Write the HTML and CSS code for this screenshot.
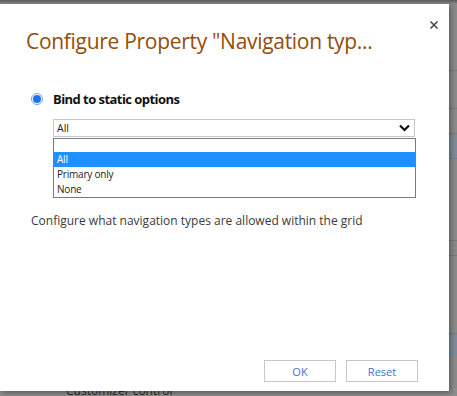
FILE: index.html
```html
<!DOCTYPE html>
<html>
<head>
<meta charset="utf-8">
<link rel="stylesheet" href="styles.css">
</head>
<body>
<div class="page">
  <div class="page-rows">
    <div class="row r1"></div>
    <div class="row r2"></div>
    <div class="row r3 sel"></div>
    <div class="row r4"></div>
    <div class="row r5"></div>
    <div class="row r6"></div>
    <div class="row r7 sel"></div>
  </div>
  <div class="page-foot"><span class="foot-text">Customizer control</span></div>
</div>
<div class="dialog">
  <button class="close" aria-label="Close"><svg width="8" height="8" viewBox="0 0 8 8"><path d="M0.5 0.5 L7.5 7.5 M7.5 0.5 L0.5 7.5" stroke="#444" stroke-width="1.5" fill="none"/></svg></button>
  <h1 class="title">Configure Property "Navigation typ...</h1>
  <div class="option">
    <span class="radio"><span class="dot"></span></span>
    <span class="option-label">Bind to static options</span>
  </div>
  <div class="select-wrap">
    <div class="select">
      <span>All</span>
      <svg class="chev" width="11" height="8" viewBox="0 0 11 8"><path d="M1 1.5 L5.5 6 L10 1.5" fill="none" stroke="#111" stroke-width="2.2"/></svg>
    </div>
    <ul class="list">
      <li class="empty"></li>
      <li class="active">All</li>
      <li>Primary only</li>
      <li>None</li>
    </ul>
  </div>
  <p class="desc">Configure what navigation types are allowed within the grid</p>
  <div class="actions">
    <button class="btn">OK</button>
    <button class="btn">Reset</button>
  </div>
</div>
</body>
</html>
```
FILE: styles.css
```css
* { box-sizing: border-box; }
html, body { margin: 0; padding: 0; }
body {
  width: 457px;
  height: 396px;
  overflow: hidden;
  position: relative;
  background: #8a8a8a;
  font-family: "Open Sans", "Noto Sans", sans-serif;
}
.page {
  height: 396px;
  display: flex;
  flex-direction: column;
  background: linear-gradient(#5a5a5a, #8a8a8a 4px);
}
.page-rows {
  flex: 1;
  display: flex;
  flex-direction: column;
  padding-top: 70px;
}
.row { border-top: 1px solid #7a7a7a; }
.r1 { height: 38px; }
.r2 { height: 25px; }
.r3 { height: 25px; }
.r4 { height: 82px; }
.r5 { height: 15px; }
.r6 { height: 78px; }
.r7 { height: 24px; }
.sel { background: #7e8c96; }
.page-foot {
  height: 8px;
  background: #8d8d8d;
  overflow: hidden;
  padding-left: 66px;
}
.foot-text {
  display: block;
  font-size: 12px;
  line-height: 12px;
  margin-top: -3px;
  color: #2a2a2a;
  font-family: "Open Sans", sans-serif;
}
.dialog {
  position: absolute;
  left: 0;
  top: 4px;
  width: 449px;
  height: 387px;
  background: #fff;
  box-shadow: 2px 2px 5px rgba(0,0,0,0.35);
  display: flex;
  flex-direction: column;
}
.close {
  position: absolute;
  left: 430px;
  top: 17px;
  border: 0;
  background: none;
  padding: 0;
  width: 8px;
  height: 8px;
  display: block;
}
.close svg { display: block; }
.title {
  margin: 22px 0 0 26px;
  font-size: 21px;
  line-height: 30px;
  font-weight: normal;
  color: #934d0b;
  letter-spacing: -0.3px;
}
.option {
  display: flex;
  align-items: center;
  margin: 34px 0 0 31px;
  height: 18px;
}
.radio {
  width: 12px;
  height: 12px;
  border-radius: 50%;
  border: 1px solid #6aa8f5;
  display: flex;
  align-items: center;
  justify-content: center;
  margin-right: 10px;
}
.dot {
  width: 8px;
  height: 8px;
  border-radius: 50%;
  background: #1a73e8;
}
.option-label {
  font-weight: bold;
  font-size: 13px;
  letter-spacing: -0.55px;
  color: #111;
}
.select-wrap {
  position: relative;
  margin: 11px 0 0 53px;
  width: 362px;
}
.select {
  height: 18px;
  border: 1px solid #c8c8c8;
  display: flex;
  align-items: center;
  justify-content: space-between;
  padding: 0 4px 0 3px;
  font-size: 10.5px;
  color: #222;
}
.list {
  position: absolute;
  left: 0;
  top: 19px;
  width: 363px;
  margin: 0;
  padding: 0;
  list-style: none;
  border: 1px solid #7a7a7a;
  background: #fff;
  font-size: 10px;
  letter-spacing: -0.2px;
  color: #222;
}
.list li {
  height: 15px;
  line-height: 15px;
  padding-left: 3px;
}
.list li.empty { height: 13px; }
.list li.active { background: #1e90ff; color: #fff; }
.desc {
  margin: 75px 0 0 31px;
  font-size: 12px;
  color: #3a3a3a;
}
.actions {
  margin-top: auto;
  display: flex;
  justify-content: flex-end;
  gap: 10px;
  padding: 0 31px 9px 0;
}
.btn {
  width: 72px;
  height: 22px;
  border: 1px solid #c6c6c6;
  background: #fff;
  color: #3e6fd8;
  font-size: 11px;
  font-family: "Open Sans", sans-serif;
  padding: 0;
}
```
